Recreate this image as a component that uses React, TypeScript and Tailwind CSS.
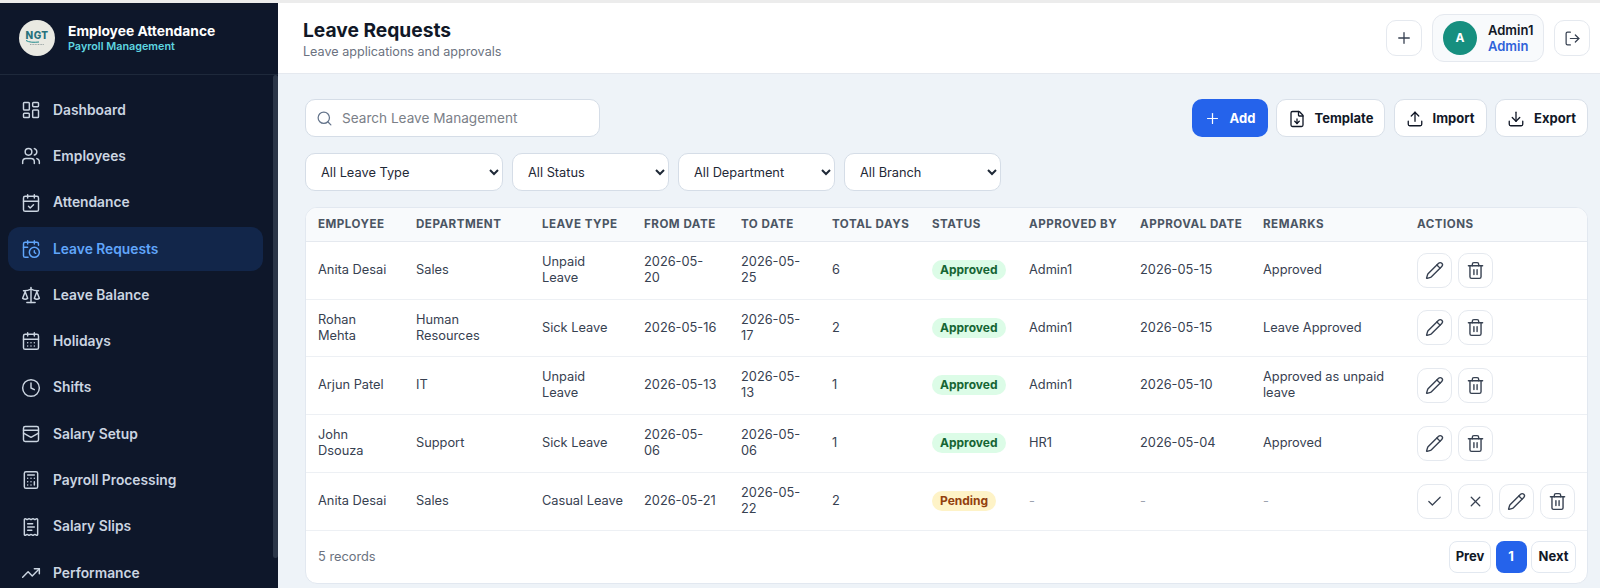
import React from 'react';
import {
  LayoutDashboard, Users, CalendarCheck, CalendarClock, Scale, CalendarDays, Clock,
  Calculator, ReceiptText, TrendingUp, Plus, LogOut, Search, FileDown, Upload, Download,
  Pencil, Trash2, Check, X,
} from 'lucide-react';

const SalaryIcon = ({ size = 20, strokeWidth = 1.75 }: { size?: number; strokeWidth?: number }) => (
  <svg width={size} height={size} viewBox="0 0 24 24" fill="none" stroke="currentColor" strokeWidth={strokeWidth} strokeLinecap="round" strokeLinejoin="round">
    <rect x="3" y="3" width="18" height="18" rx="2" />
    <path d="M3 7.5h18" />
    <path d="M3 11l9 5 9-5" />
  </svg>
);

const navItems = [
  { label: 'Dashboard', icon: LayoutDashboard },
  { label: 'Employees', icon: Users },
  { label: 'Attendance', icon: CalendarCheck },
  { label: 'Leave Requests', icon: CalendarClock, active: true },
  { label: 'Leave Balance', icon: Scale },
  { label: 'Holidays', icon: CalendarDays },
  { label: 'Shifts', icon: Clock },
  { label: 'Salary Setup', icon: SalaryIcon },
  { label: 'Payroll Processing', icon: Calculator },
  { label: 'Salary Slips', icon: ReceiptText },
  { label: 'Performance', icon: TrendingUp },
];

const rows = [
  { name: 'Anita Desai', dept: 'Sales', type: 'Unpaid Leave', from: '2026-05-20', to: '2026-05-25', days: 6, status: 'Approved', by: 'Admin1', date: '2026-05-15', remarks: 'Approved', h: 'h-[58px]' },
  { name: 'Rohan Mehta', dept: 'Human Resources', type: 'Sick Leave', from: '2026-05-16', to: '2026-05-17', days: 2, status: 'Approved', by: 'Admin1', date: '2026-05-15', remarks: 'Leave Approved', h: 'h-[57px]' },
  { name: 'Arjun Patel', dept: 'IT', type: 'Unpaid Leave', from: '2026-05-13', to: '2026-05-13', days: 1, status: 'Approved', by: 'Admin1', date: '2026-05-10', remarks: 'Approved as unpaid leave', h: 'h-[58px]' },
  { name: 'John Dsouza', dept: 'Support', type: 'Sick Leave', from: '2026-05-06', to: '2026-05-06', days: 1, status: 'Approved', by: 'HR1', date: '2026-05-04', remarks: 'Approved', h: 'h-[58px]' },
  { name: 'Anita Desai', dept: 'Sales', type: 'Casual Leave', from: '2026-05-21', to: '2026-05-22', days: 2, status: 'Pending', by: '-', date: '-', remarks: '-', h: 'h-[58px]' },
];

const columns = [
  { label: 'Employee', w: 'w-[98px]' },
  { label: 'Department', w: 'w-[126px]' },
  { label: 'Leave Type', w: 'w-[102px]' },
  { label: 'From Date', w: 'w-[97px]' },
  { label: 'To Date', w: 'w-[91px]' },
  { label: 'Total Days', w: 'w-[100px]' },
  { label: 'Status', w: 'w-[97px]' },
  { label: 'Approved By', w: 'w-[111px]' },
  { label: 'Approval Date', w: 'w-[123px]' },
  { label: 'Remarks', w: 'w-[154px]' },
  { label: 'Actions', w: 'w-[182px]' },
];

const filters = [
  { label: 'All Leave Type', w: 'w-[198px]' },
  { label: 'All Status', w: 'w-[157px]' },
  { label: 'All Department', w: 'w-[157px]' },
  { label: 'All Branch', w: 'w-[157px]' },
];

const IconBtn = ({ children }: { children: React.ReactNode }) => (
  <button className="flex h-[35px] w-[35px] items-center justify-center rounded-[10px] border border-[#e5e9ef] bg-white text-[#374151]">
    {children}
  </button>
);

const ToolBtn = ({ icon: Icon, label, w }: { icon: React.ElementType; label: string; w: string }) => (
  <button className={`flex h-[38px] ${w} items-center justify-center gap-[9px] rounded-[10px] border border-[#d9e0e9] bg-white pt-[1px] text-[13px] font-bold text-[#111827]`}>
    <Icon size={18} strokeWidth={1.75} />
    {label}
  </button>
);

const Logo = () => (
  <div className="flex h-[36px] w-[36px] flex-col items-center justify-center rounded-full bg-[#e9e9e2]">
    <span className="text-[10px] leading-[10px] font-extrabold tracking-[0.4px] text-[#27717c]">NGT</span>
    <svg width="24" height="6" viewBox="0 0 24 6" fill="none">
      <path d="M1 0.5c3 2 8 2 13 1.5" stroke="#1f8a8c" strokeWidth="1" />
      <path d="M5 4.5h14" stroke="#9aa5a5" strokeWidth="1" strokeDasharray="1 0.6" />
    </svg>
  </div>
);

export default function App() {
  return (
    <div className="flex h-[588px] w-[1600px] flex-col overflow-hidden bg-[#eef3f8] font-['Inter',sans-serif]">
      <div className="h-[3px] shrink-0 bg-[#ececec]" />
      <div className="flex min-h-0 flex-1">
        {/* sidebar */}
        <aside className="relative w-[278px] shrink-0 overflow-hidden bg-[#0e172a]">
          <div className="flex h-[72px] items-center gap-[13px] border-b border-[#1e293b] pb-[1px] pl-[19px]">
            <Logo />
            <div>
              <div className="text-[13.8px] leading-[18px] font-bold text-white">Employee Attendance</div>
              <div className="text-[10.8px] leading-[14px] font-semibold text-[#5fd6e0]">Payroll Management</div>
            </div>
          </div>
          <nav className="flex flex-col gap-[2.3px] pt-[13px] pr-[15px] pl-[8px]">
            {navItems.map((item) => (
              <div
                key={item.label}
                className={`flex h-[44px] shrink-0 items-center gap-[12px] rounded-[12px] pl-[13px] text-[13.8px] font-semibold ${
                  item.active ? 'bg-[#12264a] text-[#60a5fa]' : 'text-[#cbd5e1]'
                }`}
              >
                <item.icon size={20} strokeWidth={1.75} />
                {item.label}
              </div>
            ))}
          </nav>
          <div className="absolute top-[72px] right-0 h-[483px] w-[5px] rounded-[3px] bg-[#2b3648]" />
        </aside>

        {/* main */}
        <div className="flex min-w-0 flex-1 flex-col">
          <header className="flex h-[71px] shrink-0 items-center justify-between border-b border-[#e5e9ef] bg-white pr-[10px] pl-[25px]">
            <div>
              <h1 className="text-[19.2px] leading-[26px] font-bold text-[#111827]">Leave Requests</h1>
              <p className="text-[12.6px] leading-[17px] text-[#6b7280]">Leave applications and approvals</p>
            </div>
            <div className="flex items-center gap-[10px]">
              <button className="flex h-[36px] w-[36px] items-center justify-center rounded-[10px] border border-[#e5e9ef] bg-white text-[#374151]">
                <Plus size={18} strokeWidth={1.75} />
              </button>
              <div className="flex h-[48px] w-[112px] items-center gap-[11px] rounded-[12px] border border-[#e5e9ef] bg-[#f8fafc] pl-[10px]">
                <div className="flex h-[34px] w-[34px] items-center justify-center rounded-full bg-[#168f7f] text-[12px] font-bold text-white">A</div>
                <div>
                  <div className="text-[13px] leading-[16px] font-semibold text-[#111827]">Admin1</div>
                  <div className="text-[13px] leading-[16px] font-semibold text-[#2f62d9]">Admin</div>
                </div>
              </div>
              <button className="flex h-[36px] w-[36px] items-center justify-center rounded-[10px] border border-[#e5e9ef] bg-white text-[#374151]">
                <LogOut size={17} strokeWidth={1.75} />
              </button>
            </div>
          </header>

          <main className="flex min-h-0 flex-1 flex-col pt-[25px] pr-[12px] pl-[27px]">
            <div className="flex items-center justify-between">
              <div className="flex h-[38px] w-[295px] items-center gap-[9px] rounded-[10px] border border-[#d5dde7] bg-white pl-[10px]">
                <Search size={17} strokeWidth={1.75} className="text-[#64748b]" />
                <span className="text-[13.6px] text-[#7b8088]">Search Leave Management</span>
              </div>
              <div className="flex gap-[8.5px]">
                <button className="flex h-[38px] w-[76px] items-center justify-center gap-[9px] rounded-[10px] bg-[#2563eb] pt-[1px] text-[13px] font-bold text-white">
                  <Plus size={17} strokeWidth={1.75} />
                  Add
                </button>
                <ToolBtn icon={FileDown} label="Template" w="w-[109px]" />
                <ToolBtn icon={Upload} label="Import" w="w-[93px]" />
                <ToolBtn icon={Download} label="Export" w="w-[93px]" />
              </div>
            </div>

            <div className="mt-[16px] flex gap-[9px]">
              {filters.map((f) => (
                <select key={f.label} className={`h-[38px] ${f.w} rounded-[10px] border border-[#d5dde7] bg-white pr-[8px] pl-[11px] text-[12.8px] text-[#1f2937]`}>
                  <option>{f.label}</option>
                </select>
              ))}
            </div>

            <div className="mt-[16px] h-[377px] overflow-hidden rounded-[12px] border border-[#e2e8f0] bg-white">
              <table className="w-full table-fixed border-collapse text-left">
                <thead>
                  <tr className="h-[33px] border-b border-[#e5e9ef] bg-[#f8fafc]">
                    {columns.map((c) => (
                      <th key={c.label} className={`${c.w} px-[12px] text-[11.6px] font-bold tracking-[0.5px] whitespace-nowrap text-[#4b5563] uppercase`}>
                        {c.label}
                      </th>
                    ))}
                  </tr>
                </thead>
                <tbody className="text-[12.8px] leading-[16px] text-[#374151]">
                  {rows.map((r, i) => (
                    <tr key={i} className={`${r.h} border-b border-[#edf0f4]`}>
                      <td className="px-[12px]">{r.name}</td>
                      <td className="px-[12px]">{r.dept}</td>
                      <td className={r.type === 'Unpaid Leave' ? 'px-[12px]' : 'px-[12px] whitespace-nowrap'}>{r.type}</td>
                      <td className="px-[12px]">{r.from}</td>
                      <td className="px-[12px]">{r.to}</td>
                      <td className="px-[12px]">{r.days}</td>
                      <td className="px-[12px]">
                        <span
                          className={`inline-block rounded-full px-[8px] py-[2px] text-[12px] font-bold ${
                            r.status === 'Approved' ? 'bg-[#dcfce7] text-[#166534]' : 'bg-[#fef3c7] text-[#92400e]'
                          }`}
                        >
                          {r.status}
                        </span>
                      </td>
                      <td className={r.by === '-' ? 'px-[12px] text-[#9ca3af]' : 'px-[12px]'}>{r.by}</td>
                      <td className={r.date === '-' ? 'px-[12px] text-[#9ca3af]' : 'px-[12px]'}>{r.date}</td>
                      <td className={r.remarks === '-' ? 'px-[12px] text-[#9ca3af]' : 'px-[12px]'}>{r.remarks}</td>
                      <td className="px-[12px]">
                        <div className="flex gap-[6px]">
                          {r.status === 'Pending' && (
                            <>
                              <IconBtn><Check size={17} strokeWidth={1.75} /></IconBtn>
                              <IconBtn><X size={17} strokeWidth={1.75} /></IconBtn>
                            </>
                          )}
                          <IconBtn><Pencil size={19} strokeWidth={1.75} /></IconBtn>
                          <IconBtn><Trash2 size={19} strokeWidth={1.75} /></IconBtn>
                        </div>
                      </td>
                    </tr>
                  ))}
                </tbody>
              </table>
              <div className="flex h-[52px] items-center justify-between pr-[11px] pl-[12px]">
                <span className="text-[12.8px] text-[#6b7280]">5 records</span>
                <div className="flex gap-[4.5px] text-[13px] font-bold">
                  <button className="h-[32px] w-[42px] rounded-[8px] border border-[#e2e8f0] bg-white text-[#111827]">Prev</button>
                  <button className="h-[32px] w-[31px] rounded-[8px] bg-[#2563eb] text-white">1</button>
                  <button className="h-[32px] w-[45px] rounded-[8px] border border-[#e2e8f0] bg-white text-[#111827]">Next</button>
                </div>
              </div>
            </div>
          </main>
        </div>
      </div>
    </div>
  );
}
